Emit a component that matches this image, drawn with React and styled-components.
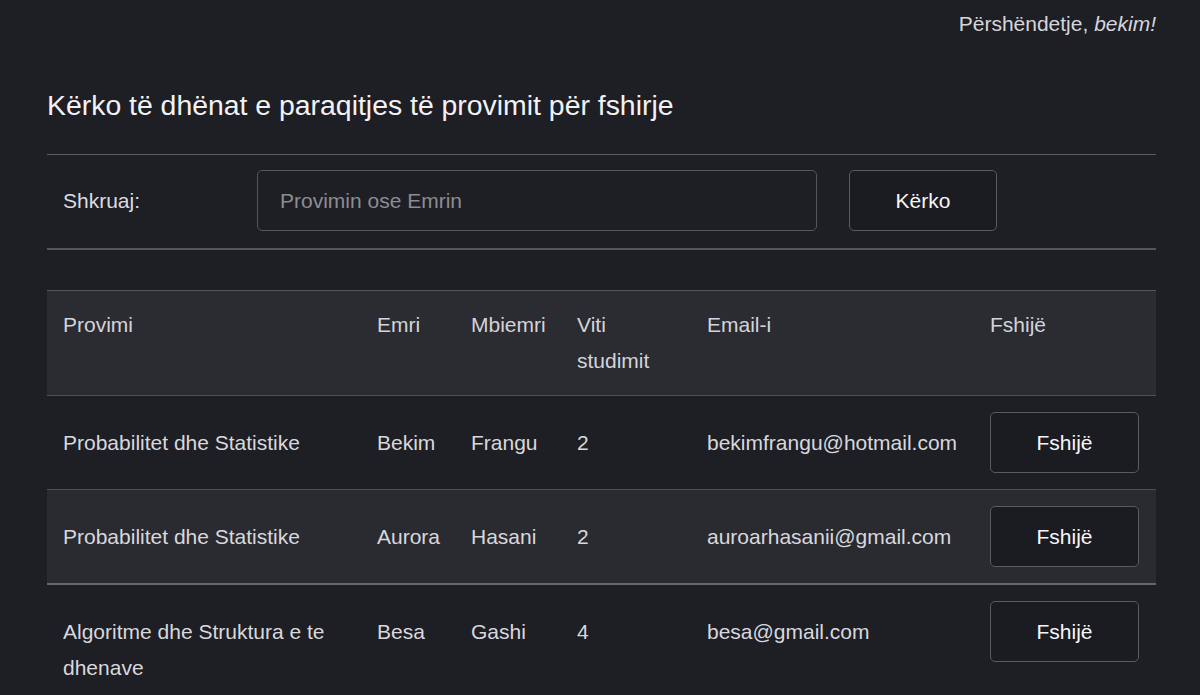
import React from "react";
import styled, { createGlobalStyle } from "styled-components";

const GlobalStyle = createGlobalStyle`
  html, body {
    margin: 0;
    padding: 0;
    background: #1e1e25;
  }
  body {
    font-family: "Liberation Sans", Arial, sans-serif;
    color: #dedee2;
  }
  * { box-sizing: border-box; }
`;

const rows = [
  { provimi: "Probabilitet dhe Statistike", emri: "Bekim", mbiemri: "Frangu", viti: 2, email: "bekimfrangu@hotmail.com" },
  { provimi: "Probabilitet dhe Statistike", emri: "Aurora", mbiemri: "Hasani", viti: 2, email: "auroarhasanii@gmail.com" },
  { provimi: "Algoritme dhe Struktura e te dhenave", emri: "Besa", mbiemri: "Gashi", viti: 4, email: "besa@gmail.com" },
];

const cols = [314, 94, 106, 130, 283, 182];

export default function App() {
  return (
    <Page>
      <GlobalStyle />
      <Container>
        <Greeting>
          Përshëndetje, <em>bekim!</em>
        </Greeting>
        <Title>Kërko të dhënat e paraqitjes të provimit për fshirje</Title>
        <SearchBar>
          <Label>Shkruaj:</Label>
          <SearchInput placeholder="Provimin ose Emrin" />
          <Button>Kërko</Button>
        </SearchBar>

        <Table>
          <colgroup>
            {cols.map((w, i) => (
              <col key={i} style={{ width: w }} />
            ))}
          </colgroup>
          <thead>
            <tr>
              <Th>Provimi</Th>
              <Th>Emri</Th>
              <Th>Mbiemri</Th>
              <Th>Viti studimit</Th>
              <Th>Email-i</Th>
              <Th>Fshijë</Th>
            </tr>
          </thead>
          <tbody>
            {rows.map((r, i) => (
              <Row key={i} $striped={i % 2 === 1}>
                <Td>{r.provimi}</Td>
                <Td>{r.emri}</Td>
                <Td>{r.mbiemri}</Td>
                <Td>{r.viti}</Td>
                <Td>{r.email}</Td>
                <Td>
                  <Button $wide>Fshijë</Button>
                </Td>
              </Row>
            ))}
          </tbody>
        </Table>
      </Container>
    </Page>
  );
}

const Page = styled.div`
  min-height: 695px;
  background: #1e1e25;
`;

const Container = styled.div`
  width: 1109px;
  margin-left: 47px;
  display: flex;
  flex-direction: column;
`;

const Greeting = styled.div`
  align-self: flex-end;
  margin-top: 8px;
  font-size: 21px;
  line-height: 32px;
  color: #d6d6da;
  em {
    font-style: italic;
  }
`;

const Title = styled.h2`
  margin: 48px 0 0 0;
  font-size: 28.4px;
  font-weight: 400;
  line-height: 34px;
  color: #f2f2f4;
  padding-bottom: 32px;
  border-bottom: 1px solid #5c5c63;
`;

const SearchBar = styled.div`
  display: grid;
  grid-template-columns: 178px 560px 148px;
  column-gap: 32px;
  align-items: center;
  padding: 15px 0 17px;
  border-bottom: 2px solid #55555c;
  margin-bottom: 40px;
`;

const Label = styled.span`
  padding-left: 16px;
  font-size: 21px;
  color: #dcdce0;
`;

const SearchInput = styled.input`
  height: 61px;
  width: 100%;
  padding: 0 22px;
  background: #1e1e25;
  border: 1px solid #55555c;
  border-radius: 5px;
  font-family: "Liberation Sans", Arial, sans-serif;
  font-size: 21px;
  color: #e0e0e4;
  outline: none;
  &::placeholder {
    color: #8c8c93;
  }
`;

const Button = styled.button`
  height: 61px;
  width: ${(p) => (p.$wide ? "149px" : "148px")};
  background: #1b1b22;
  border: 1px solid #5a5a61;
  border-radius: 5px;
  font-family: "Liberation Sans", Arial, sans-serif;
  font-size: 21px;
  font-weight: 400;
  color: #f6f6f8;
  cursor: pointer;
`;

const Table = styled.table`
  width: 1109px;
  table-layout: fixed;
  border-collapse: collapse;
  border-top: 1px solid #56565d;
  font-size: 21px;
  line-height: 36px;
`;

const Th = styled.th`
  text-align: left;
  font-weight: 400;
  vertical-align: top;
  padding: 16px 16px;
  background: #2b2b32;
  color: #d4d4d8;
  border-bottom: 1px solid #4e4e55;
`;

const Row = styled.tr`
  background: ${(p) => (p.$striped ? "#2a2a31" : "#1e1e25")};
  border-bottom: ${(p) => (p.$striped ? "2px solid #66666d" : "1px solid #4e4e55")};
`;

const Td = styled.td`
  vertical-align: baseline;
  padding: 16px 16px;
  color: #d8d8dc;
`;
